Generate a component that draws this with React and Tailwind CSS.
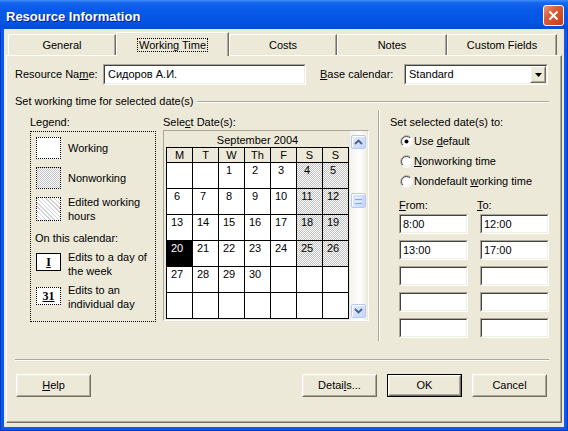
import React from "react";

function U({ children }) {
  return <span className="underline underline-offset-[1px]">{children}</span>;
}

function Sunken({ className = "", children }) {
  return (
    <div className={`border border-t-[#aca899] border-l-[#aca899] border-r-white border-b-white ${className}`}>
      <div className="h-full w-full border border-t-[#404040] border-l-[#404040] border-r-[#f1efe2] border-b-[#f1efe2] bg-white flex items-center">
        {children}
      </div>
    </div>
  );
}

function Raised({ className = "", children }) {
  return (
    <div className={`border border-t-white border-l-white border-r-[#716f64] border-b-[#716f64] ${className}`}>
      <div className="h-full w-full border border-t-[#f1efe2] border-l-[#f1efe2] border-r-[#aca899] border-b-[#aca899] bg-[#ece9d8] flex items-center justify-center">
        {children}
      </div>
    </div>
  );
}

function Btn({ children, def }) {
  if (def)
    return (
      <div className="w-[75px] h-[23px] border border-black">
        <Raised className="h-full w-full">{children}</Raised>
      </div>
    );
  return <Raised className="w-[75px] h-[23px]">{children}</Raised>;
}

function Tab({ w, children }) {
  return (
    <div
      className={`${w} h-[21px] border-l border-t border-r border-t-white border-l-white border-r-[#716f64] rounded-tl-[2px] shadow-[inset_-1px_0_0_#aca899] flex items-center justify-center leading-[13px]`}
    >
      {children}
    </div>
  );
}

function Radio({ checked, children }) {
  return (
    <div className="h-[20px] flex items-center pl-[10px]">
      <svg width="13" height="13" viewBox="0 0 13 13">
        <circle cx="6.5" cy="6.5" r="6" fill="#ffffff" />
        <path d="M2.26 10.74 A6 6 0 0 1 10.74 2.26" stroke="#aca899" strokeWidth="1" fill="none" />
        <path d="M10.74 2.26 A6 6 0 0 1 2.26 10.74" stroke="#ffffff" strokeWidth="1" fill="none" />
        <path d="M2.96 10.04 A5 5 0 0 1 10.04 2.96" stroke="#404040" strokeWidth="1" fill="none" />
        <path d="M10.04 2.96 A5 5 0 0 1 2.96 10.04" stroke="#f1efe2" strokeWidth="1" fill="none" />
        {checked && <circle cx="6.5" cy="6.5" r="2" fill="#000000" />}
      </svg>
      <span className="ml-[1px] leading-[13px]">{children}</span>
    </div>
  );
}

const checker =
  "bg-[repeating-conic-gradient(#c0c0c0_0%_25%,#ffffff_0%_50%)] bg-[length:2px_2px]";
const stripes =
  "bg-[repeating-linear-gradient(45deg,#d2d2d2_0px,#d2d2d2_1px,#ffffff_1px,#ffffff_3px)]";

const weeks = [
  [null, null, 1, 2, 3, 4, 5],
  [6, 7, 8, 9, 10, 11, 12],
  [13, 14, 15, 16, 17, 18, 19],
  [20, 21, 22, 23, 24, 25, 26],
  [27, 28, 29, 30, null, null, null],
  [null, null, null, null, null, null, null],
];

function ScrollBtn({ up }) {
  return (
    <div className="w-[15px] h-[14px] rounded-[2px] border border-[#b7cbf5] bg-[linear-gradient(135deg,#e4ecfe,#c3d5fb)] shadow-[inset_1px_1px_0_#ffffff] flex items-center justify-center">
      <svg width="9" height="6" viewBox="0 0 9 6">
        <path
          d={up ? "M1 5 L4.5 1.5 L8 5" : "M1 1 L4.5 4.5 L8 1"}
          stroke="#4d6185"
          strokeWidth="1.8"
          fill="none"
        />
      </svg>
    </div>
  );
}

function Calendar() {
  const heads = ["M", "T", "W", "Th", "F", "S", "S"];
  return (
    <div className="mt-[1px] h-[191px] border border-t-[#aca899] border-l-[#aca899] border-r-white border-b-white flex pl-[2px] pr-[1px]">
      <div className="w-[183px] flex flex-col">
        <div className="h-[16px] pt-[3px] text-center leading-[13px]">September 2004</div>
        <div className="grid grid-cols-[repeat(7,25px)] grid-rows-[14px_repeat(6,25px)] gap-px p-px bg-black">
          {heads.map((h, i) => (
            <div key={"h" + i} className="bg-[#ece9d8] text-center leading-[14px]">
              {h}
            </div>
          ))}
          {weeks.map((wk, wi) =>
            wk.map((d, ci) => {
              const sel = d === 20;
              const nonwork = wi < 4 && ci >= 5;
              const bg = sel ? "bg-black text-white" : nonwork ? checker : "bg-white";
              return (
                <div key={wi + "-" + ci} className={`${bg} pr-[5px] pt-[1px] text-center leading-[13px]`}>
                  {d ?? ""}
                </div>
              );
            })
          )}
        </div>
      </div>
      <div className="ml-px w-[17px] flex flex-col items-center pt-[4px] pb-[2px] bg-[linear-gradient(90deg,#f4f3ee,#fdfdfb_60%,#eeede5)]">
        <ScrollBtn up />
        <div className="mt-[44px] w-[15px] h-[15px] rounded-[2px] border border-[#b7cbf5] bg-[linear-gradient(90deg,#dde8fe,#c6d7fc)] shadow-[inset_1px_1px_0_#ffffff] flex flex-col items-center justify-center gap-px">
          <div className="w-[7px] h-px bg-[#eef4fe]" />
          <div className="w-[7px] h-px bg-[#8ca8e6]" />
          <div className="w-[7px] h-px bg-[#eef4fe]" />
          <div className="w-[7px] h-px bg-[#8ca8e6]" />
        </div>
        <div className="mt-auto">
          <ScrollBtn />
        </div>
      </div>
    </div>
  );
}

function Swatch({ className = "", h = "h-[22px]" }) {
  return <div className={`w-[25px] ${h} shrink-0 border border-dotted border-black ${className}`} />;
}

function Legend() {
  return (
    <div className="mt-[2px] h-[191px] border border-dotted border-black pl-[5px] pt-[5px] flex flex-col">
      <div className="flex items-center h-[22px]">
        <Swatch className="bg-white" />
        <span className="ml-[7px] leading-[13px]">Working</span>
      </div>
      <div className="mt-[8px] flex items-center h-[22px]">
        <Swatch className={checker} />
        <span className="ml-[7px] leading-[13px]">Nonworking</span>
      </div>
      <div className="mt-[8px] flex items-center h-[24px]">
        <Swatch className={stripes} h="h-[24px]" />
        <span className="ml-[7px] leading-[14px]">
          Edited working
          <br />
          hours
        </span>
      </div>
      <div className="mt-[11px] -ml-px leading-[13px]">On this calendar:</div>
      <div className="mt-[5px] flex items-start">
        <div className="mt-[3px] w-[25px] h-[18px] shrink-0 border border-black bg-white flex items-center justify-center font-['Liberation_Serif',serif] font-bold text-[12px] leading-[12px]">
          <span className="underline">I</span>
        </div>
        <span className="ml-[7px] leading-[14px]">
          Edits to a day of
          <br />
          the week
        </span>
      </div>
      <div className="mt-[5px] flex items-start">
        <div className="mt-[4px] w-[25px] h-[18px] shrink-0 border border-dotted border-black bg-white flex items-center justify-center font-['Liberation_Serif',serif] font-bold text-[12px] leading-[12px]">
          <span className="underline">31</span>
        </div>
        <span className="ml-[7px] leading-[14px]">
          Edits to an
          <br />
          individual day
        </span>
      </div>
    </div>
  );
}

function TimeBox({ value }) {
  return (
    <Sunken className="w-[69px] h-[20px]">
      <span className="pl-[2px] leading-[13px]">{value}</span>
    </Sunken>
  );
}

export default function App() {
  return (
    <div className="w-[568px] h-[431px] bg-[#0a5ae8] shadow-[inset_1px_0_0_#0638c8,inset_-1px_0_0_#0638c8,inset_0_-1px_0_#0638c8] flex flex-col font-['Liberation_Sans',Arial,sans-serif] text-[11px] text-black select-none">
      {/* title bar */}
      <div className="h-[29px] shrink-0 flex items-center justify-between pl-[6px] pr-[4px] bg-[linear-gradient(180deg,#3d8ef7_0%,#1466ee_10%,#0759e8_35%,#0555e4_75%,#034ad6_100%)]">
        <span className="pt-[4px] text-white font-bold text-[13px] leading-[14px] [text-shadow:1px_1px_0_#0a1883]">
          Resource Information
        </span>
        <div className="mt-[2px] w-[21px] h-[21px] rounded-[3px] border border-white bg-[linear-gradient(135deg,#eb9479_0%,#dc5a34_40%,#c83c16_100%)] flex items-center justify-center">
          <svg width="11" height="11" viewBox="0 0 11 11">
            <path d="M1.5 1.5 L9.5 9.5 M9.5 1.5 L1.5 9.5" stroke="#ffffff" strokeWidth="2" />
          </svg>
        </div>
      </div>

      {/* dialog body */}
      <div className="mx-[4px] h-[398px] bg-[#ece9d8] px-[2px] pt-[3px] flex flex-col">
        {/* tabs */}
        <div className="h-[23px] flex items-end pl-[2px]">
          <Tab w="w-[108px]">General</Tab>
          <div className="relative z-10 -mb-px w-[113px] h-[24px] bg-[#ece9d8] border-l border-t border-r border-t-white border-l-white border-r-[#716f64] rounded-tl-[2px] shadow-[inset_-1px_0_0_#aca899] flex items-center justify-center">
            <span className="border border-dotted border-black px-[1px] leading-[12px]">Working Time</span>
          </div>
          <Tab w="w-[108px]">Costs</Tab>
          <Tab w="w-[110px]">Notes</Tab>
          <Tab w="w-[110px]">Custom Fields</Tab>
        </div>

        {/* tab page */}
        <div className="h-[368px] border border-t-white border-l-white border-r-[#716f64] border-b-[#716f64] shadow-[inset_-1px_-1px_0_#aca899] pl-[8px] pr-[12px] pt-[8px] flex flex-col">
          {/* resource name / base calendar */}
          <div className="h-[21px] flex items-center">
            <span className="w-[88px] leading-[13px]">
              Resource Na<U>m</U>e:
            </span>
            <Sunken className="w-[203px] h-[21px]">
              <span className="pl-[3px] leading-[13px]">Сидоров А.И.</span>
            </Sunken>
            <span className="ml-[14px] w-[84px] leading-[13px]">
              <U>B</U>ase calendar:
            </span>
            <Sunken className="w-[144px] h-[21px]">
              <span className="flex-1 pl-[3px] leading-[13px]">Standard</span>
              <Raised className="w-[16px] h-full">
                <svg width="7" height="4" viewBox="0 0 7 4">
                  <path d="M0 0 H7 L3.5 4 Z" fill="#000000" />
                </svg>
              </Raised>
            </Sunken>
          </div>

          {/* group heading */}
          <div className="mt-[10px] h-[13px] flex items-center">
            <span className="leading-[13px]">Set working time for selected date(s)</span>
            <div className="flex-1 ml-[3px] h-[2px] border-t border-b border-t-[#aca899] border-b-white" />
          </div>

          {/* main area */}
          <div className="mt-[2px] h-[231px] flex">
            <div className="ml-[15px] w-[126px] pt-[6px] flex flex-col">
              <div className="leading-[13px]">Legend:</div>
              <Legend />
            </div>

            <div className="ml-[7px] w-[206px] pt-[6px] flex flex-col">
              <div className="leading-[13px]">
                Sele<U>c</U>t Date(s):
              </div>
              <Calendar />
            </div>

            <div className="ml-[9px] w-[2px] h-full border-l border-r border-l-[#aca899] border-r-white" />

            <div className="ml-[10px] pt-[6px] flex flex-col">
              <div className="leading-[13px]">Set selected date(s) to:</div>
              <div className="mt-[2px]">
                <Radio checked>
                  Use <U>d</U>efault
                </Radio>
                <Radio>
                  <U>N</U>onworking time
                </Radio>
                <Radio>
                  Nondefault <U>w</U>orking time
                </Radio>
              </div>
              <div className="mt-[8px] pl-[9px] flex gap-[12px]">
                <div className="w-[69px] flex flex-col">
                  <div className="leading-[13px]">
                    <U>F</U>rom:
                  </div>
                  <div className="mt-[2px] flex flex-col gap-[6px]">
                    <TimeBox value="8:00" />
                    <TimeBox value="13:00" />
                    <TimeBox value="" />
                    <TimeBox value="" />
                    <TimeBox value="" />
                  </div>
                </div>
                <div className="w-[69px] flex flex-col">
                  <div className="-ml-[3px] leading-[13px]">
                    <U>T</U>o:
                  </div>
                  <div className="mt-[2px] flex flex-col gap-[6px]">
                    <TimeBox value="12:00" />
                    <TimeBox value="17:00" />
                    <TimeBox value="" />
                    <TimeBox value="" />
                    <TimeBox value="" />
                  </div>
                </div>
              </div>
            </div>
          </div>

          {/* bottom separator */}
          <div className="mt-[18px] h-[2px] border-t border-b border-t-[#aca899] border-b-white" />

          {/* buttons */}
          <div className="mt-[13px] flex items-center justify-between pl-px pr-[2px]">
            <Btn>
              <U>H</U>elp
            </Btn>
            <div className="flex gap-[10px]">
              <Btn>
                Detai<U>l</U>s...
              </Btn>
              <Btn def>OK</Btn>
              <Btn>Cancel</Btn>
            </div>
          </div>
        </div>
      </div>
    </div>
  );
}
